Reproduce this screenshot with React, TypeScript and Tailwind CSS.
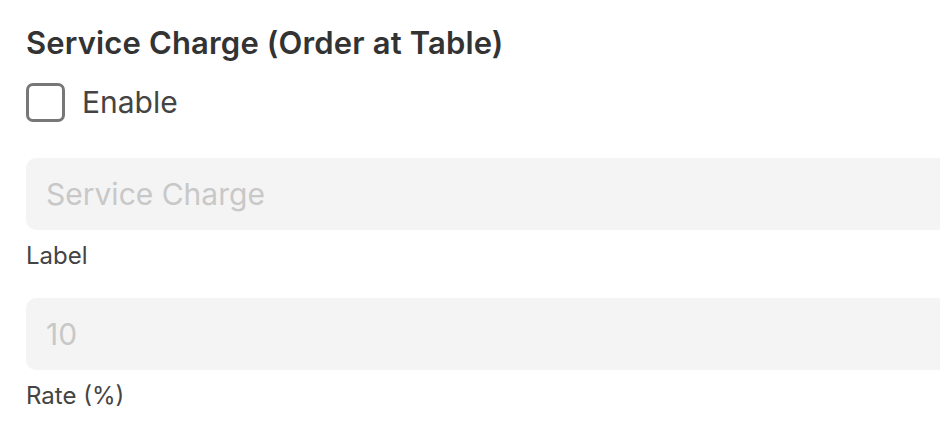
import React from "react";

export default function App() {
  return (
    <div
      className="w-[940px] h-[444px] overflow-hidden bg-white pl-[26px] pt-[25px]"
      style={{ fontFamily: "Inter, 'Noto Sans', sans-serif" }}
    >
      <h2 className="text-[31px] leading-[36px] font-semibold text-[#333333] tracking-[0.15px]">
        Service Charge (Order at Table)
      </h2>
      <label className="mt-[21px] flex items-center gap-[17px] h-[40px]">
        <span className="w-[39px] h-[39px] rounded-[7px] border-[3px] border-[#777777] bg-white" />
        <span className="text-[30px] leading-[40px] text-[#444444]">Enable</span>
      </label>
      <div className="mt-[36px]">
        <div className="h-[72px] bg-[#f4f4f4] rounded-l-[10px] flex items-center pl-[20px]">
          <span className="text-[30px] text-[#c8c8c8]">Service Charge</span>
        </div>
        <div className="mt-[12px] text-[24px] leading-[28px] text-[#444444]">Label</div>
      </div>
      <div className="mt-[28px]">
        <div className="h-[72px] bg-[#f4f4f4] rounded-l-[10px] flex items-center pl-[20px]">
          <span className="text-[30px] text-[#c8c8c8]">10</span>
        </div>
        <div className="mt-[12px] text-[24px] leading-[28px] text-[#444444]">Rate (%)</div>
      </div>
    </div>
  );
}
